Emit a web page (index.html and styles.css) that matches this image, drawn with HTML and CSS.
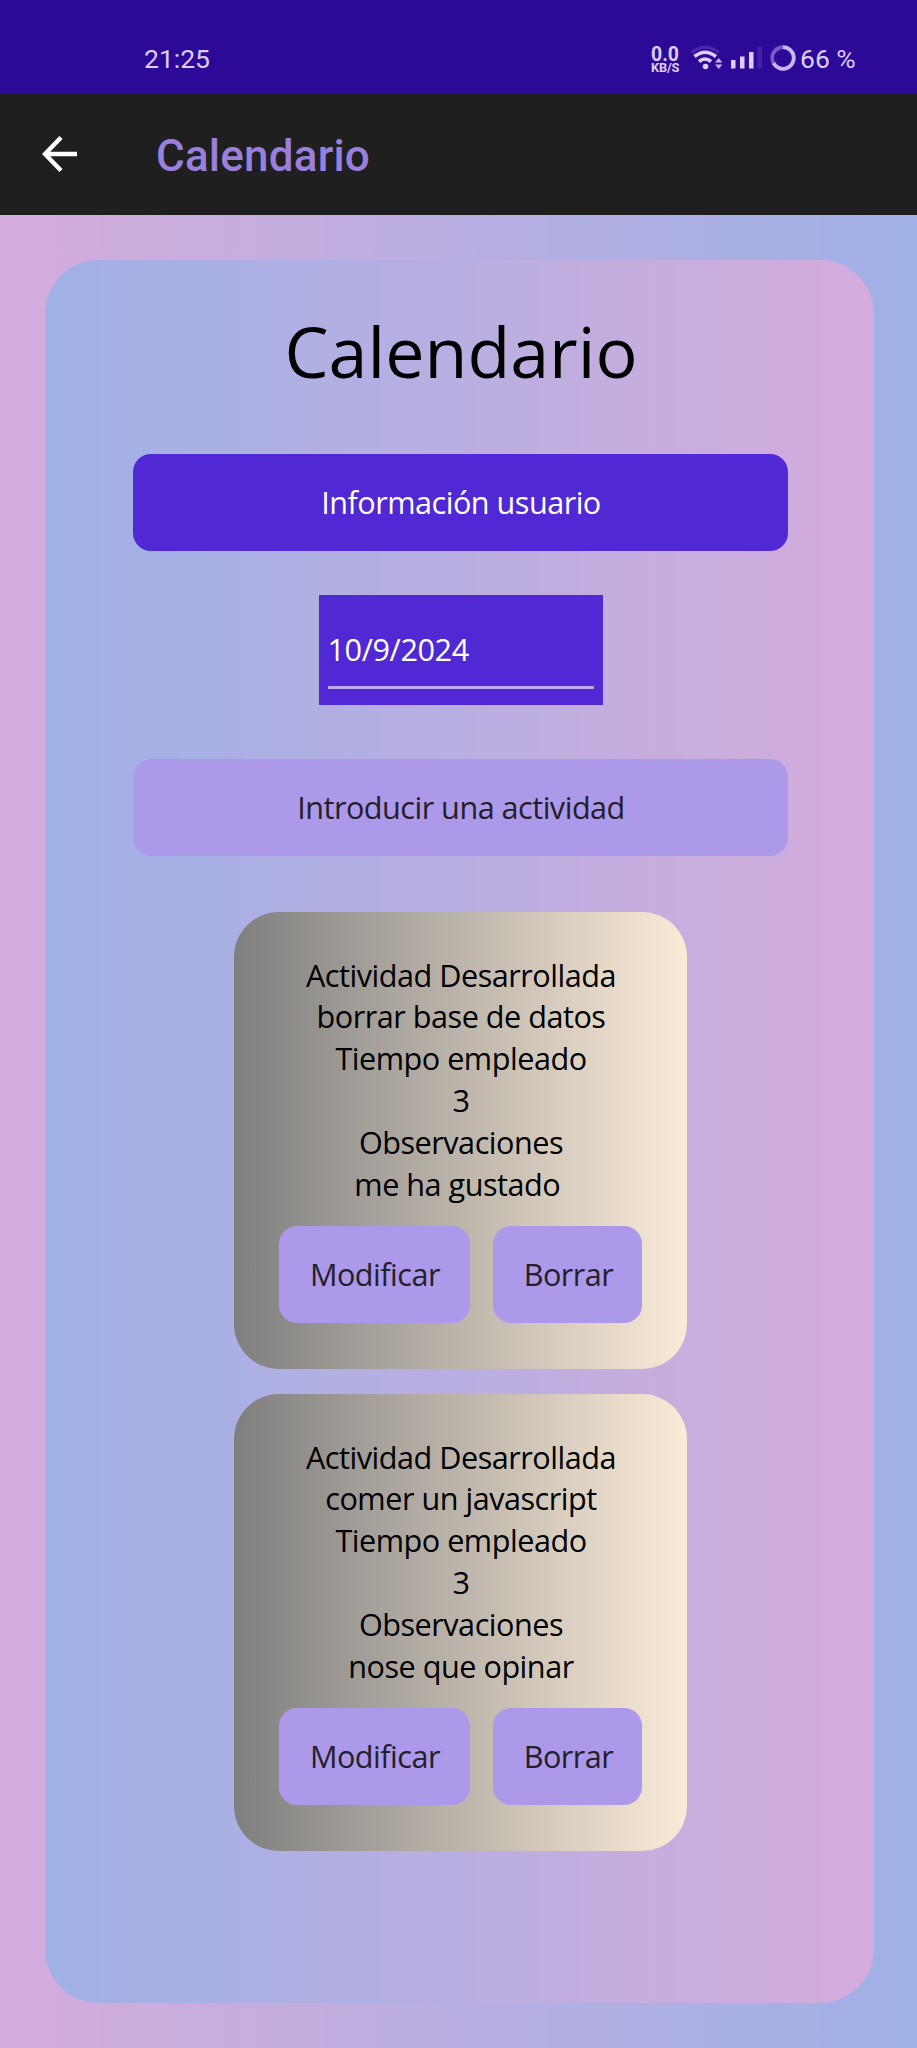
FILE: index.html
```html
<!DOCTYPE html>
<html lang="es">
<head>
<meta charset="utf-8">
<title>Calendario</title>
<link rel="stylesheet" href="styles.css">
</head>
<body>
<div class="status">
  <span class="clock">21:25</span>
  <div class="indicators">
    <div class="speed"><span class="rate">0.0</span><span class="unit">KB/S</span></div>
    <svg class="icons" width="110" height="28" viewBox="0 0 110 28" fill="none">
      <path d="M1.500 7.500Q15 -3 29 7.500" stroke="#4a27ab" stroke-width="3"/>
      <path d="M4.500 11.500Q15 3 26 11.500M9 16.500Q15 11.500 21 16.500" stroke="#e0cffa" stroke-width="3.600"/>
      <circle cx="15.500" cy="21.500" r="2.800" fill="#e0cffa"/>
      <path d="M25 17.500l3.700-4.500 3.700 4.500zM25 19.500l3.700 4.500 3.700-4.500z" fill="#c5b0ed"/>
      <path d="M41 15h4.500v8.500H41zM50 11.500h4.500v12H50zM59 7h4.500v16.500H59z" fill="#e0cffa"/>
      <path d="M67.500 1.500h4.500v22h-4.500z" fill="#4320a4"/>
      <circle cx="93" cy="13" r="10.800" stroke="#7958ca" stroke-width="3.700"/>
      <path d="M93 2.200A10.800 10.800 0 1 1 83.500 18.200" stroke="#c9b6f2" stroke-width="3.700"/>
    </svg>
    <span class="battery">66 %</span>
  </div>
</div>
<header class="appbar">
  <svg class="back" width="36" height="36" viewBox="0 0 36 36" fill="none" stroke="#fff" stroke-width="4.400"><path d="M35 18H3M19 1.500L3 18 19 34.500"/></svg>
  <span class="appname">Calendario</span>
</header>
<main class="page">
  <section class="panel">
    <h1 class="title">Calendario</h1>
    <button class="btn primary wide">Información usuario</button>
    <div class="date"><span class="datevalue">10/9/2024</span></div>
    <button class="btn wide">Introducir una actividad</button>
    <div class="list">
      <article class="card">
        <p class="line">Actividad Desarrollada</p>
        <p class="line">borrar base de datos</p>
        <p class="line">Tiempo empleado</p>
        <p class="line">3</p>
        <p class="line">Observaciones</p>
        <p class="line">me ha gustado&nbsp;</p>
        <div class="actions"><button class="btn modify">Modificar</button><button class="btn delete">Borrar</button></div>
      </article>
      <article class="card">
        <p class="line">Actividad Desarrollada</p>
        <p class="line">comer un javascript</p>
        <p class="line">Tiempo empleado</p>
        <p class="line">3</p>
        <p class="line">Observaciones</p>
        <p class="line">nose que opinar</p>
        <div class="actions"><button class="btn modify">Modificar</button><button class="btn delete">Borrar</button></div>
      </article>
    </div>
  </section>
</main>
</body>
</html>
```
FILE: styles.css
```css
* { box-sizing: border-box; }
body {
  margin: 0;
  width: 917px;
  height: 2048px;
  overflow: hidden;
  display: flex;
  flex-direction: column;
  font-family: "Open Sans", sans-serif;
  font-size: 30.6px;
  color: #000;
}
.status {
  height: 93px;
  flex: none;
  background: #2b0a98;
  color: #dfcdfa;
  font-family: Roboto, sans-serif;
  font-size: 26.5px;
  display: flex;
  justify-content: space-between;
  padding: 42px 62px 0 144px;
  line-height: 34px;
}
.indicators { display: flex; }
.speed {
  display: flex;
  flex-direction: column;
  width: 30px;
  margin-right: 9px;
  padding-top: 4px;
  font-weight: 700;
  white-space: nowrap;
}
.rate { font-size: 19.5px; line-height: 21px; height: 17px; margin-top: -2px; }
.unit { font-size: 12.8px; line-height: 13px; letter-spacing: -0.2px; }
.icons { margin-top: 3px; }
.battery { width: 55px; white-space: nowrap; }
.appbar {
  height: 122px;
  flex: none;
  background: #1f1f1f;
  display: flex;
  align-items: center;
  padding-left: 42px;
  font-family: Roboto, sans-serif;
}
.appname {
  margin-left: 78px;
  padding-top: 4px;
  font-size: 44px;
  letter-spacing: 0.2px;
  font-weight: 500;
  color: #9880dc;
}
.page {
  flex: 1;
  padding: 45px 43px 45px 45px;
  background: linear-gradient(90deg, #d4acdc, #9fb1e6);
}
.panel {
  height: 1743px;
  border-radius: 54px;
  background: linear-gradient(90deg, #9fb1e6, #d4acdc);
  display: flex;
  flex-direction: column;
  align-items: center;
  padding: 44px 0 0 2px;
}
.title {
  margin: 0 0 55px;
  padding-left: 1px;
  font-size: 70px;
  line-height: 95px;
  font-weight: 400;
}
.btn {
  height: 97px;
  padding: 0 0 2px 1px;
  border: 0;
  border-radius: 18px;
  background: #ac99ea;
  color: #242029;
  font: inherit;
  letter-spacing: -0.5px;
  white-space: nowrap;
}
.wide { width: 655px; flex: none; }
.primary { background: #5029d5; color: #fff; }
.date {
  width: 284px;
  height: 110px;
  margin: 44px 0 54px;
  padding: 33px 9px 0;
  background: #5029d5;
  color: #fff;
  letter-spacing: -0.4px;
}
.datevalue {
  display: block;
  height: 61px;
  line-height: 42px;
  border-bottom: 3px solid #bda9ee;
}
.list {
  margin-top: 55.6px;
  display: flex;
  flex-direction: column;
  gap: 24.5px;
}
.card {
  width: 453.5px;
  height: 457.5px;
  padding: 43px 45px 0;
  border-radius: 45px;
  background: linear-gradient(90deg, #7f7f7f, #faebd7);
}
.line {
  margin: 0;
  padding-left: 1px;
  text-align: center;
  line-height: 41.8px;
  letter-spacing: -0.48px;
  white-space: nowrap;
}
.actions { display: flex; gap: 22.5px; margin-top: 20.7px; }
.modify { width: 192px; }
.delete { width: 150px; padding-left: 2px; }
```
